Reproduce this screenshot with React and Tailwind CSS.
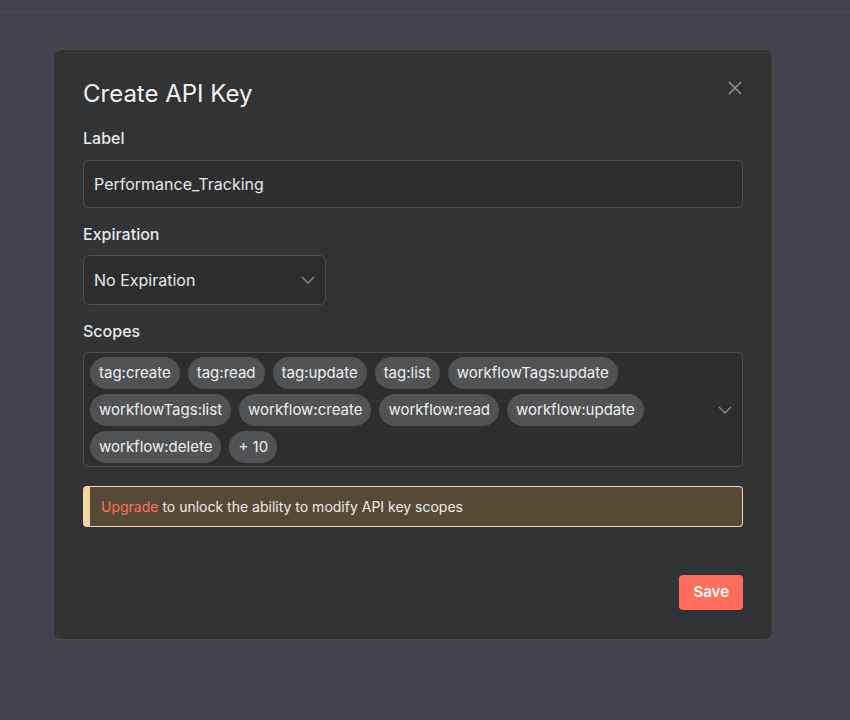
const scopes = [
  'tag:create',
  'tag:read',
  'tag:update',
  'tag:list',
  'workflowTags:update',
  'workflowTags:list',
  'workflow:create',
  'workflow:read',
  'workflow:update',
  'workflow:delete',
  '+ 10',
]

function Chevron({ className }) {
  return (
    <svg width="14" height="8" viewBox="0 0 14 8" fill="none" className={className}>
      <path d="M1 1l6 6 6-6" stroke="#8a8b8c" strokeWidth="1.3" />
    </svg>
  )
}

export default function App() {
  return (
    <div className="min-h-[720px] bg-[#43424d] font-['Inter',sans-serif] text-[#e8e8e8]">
      <div className="h-[13px] border-b border-[#4c4b57]" />
      <div className="pt-[36px] pl-[53px]">
        <div className="w-[720px] rounded-lg border border-[#4a4b4d] bg-[#323334] px-[29px] pt-[27px] pb-[29px]">
          <div className="flex items-start justify-between">
            <h1 className="text-[24px] leading-[34px] text-[#f2f2f2]">Create API Key</h1>
            <button className="mr-[1px] mt-[4px] text-[#9a9b9c]">
              <svg width="14" height="14" viewBox="0 0 14 14" fill="none">
                <path d="M1 1l12 12M13 1L1 13" stroke="currentColor" strokeWidth="1.4" />
              </svg>
            </button>
          </div>

          <div className="mt-[17px] text-[16px] font-medium leading-[20px]">Label</div>
          <div className="mt-[12px] flex h-[48px] items-center rounded-md border border-[#4d4e50] bg-[#2d2e2f] px-[10px] text-[16px]">
            Performance_Tracking
          </div>

          <div className="mt-[16px] text-[16px] font-medium leading-[20px]">Expiration</div>
          <div className="mt-[11px] flex h-[50px] w-[243px] items-center justify-between rounded-md border border-[#4d4e50] bg-[#2d2e2f] pl-[10px] pr-[10px] text-[16px]">
            <span>No Expiration</span>
            <Chevron />
          </div>

          <div className="mt-[16px] text-[16px] font-medium leading-[20px]">Scopes</div>
          <div className="mt-[11px] flex items-center rounded-md border border-[#4d4e50] bg-[#2d2e2f] pt-[4px] pb-[3px] pl-[6px] pr-[10px]">
            <div className="flex flex-1 flex-wrap gap-x-[8px] gap-y-[5px]">
              {scopes.map((s) => (
                <span
                  key={s}
                  className="flex h-[32px] items-center rounded-full bg-[#515254] px-[9px] text-[15px] text-[#f0f0f0]"
                >
                  {s}
                </span>
              ))}
            </div>
            <Chevron />
          </div>

          <div className="mt-[19px] flex h-[41px] items-center rounded border border-l-[7px] border-[#f3d6a2] bg-[#564a37] pl-[11px] text-[14px] text-[#f0ece4]">
            <span className="text-[#ff6f5c]">Upgrade</span>&nbsp;to unlock the ability to modify API key scopes
          </div>

          <div className="mt-[48px] flex justify-end">
            <button className="h-[35px] rounded bg-[#ff6d5a] px-[14px] text-[15px] font-semibold text-white">
              Save
            </button>
          </div>
        </div>
      </div>
    </div>
  )
}
